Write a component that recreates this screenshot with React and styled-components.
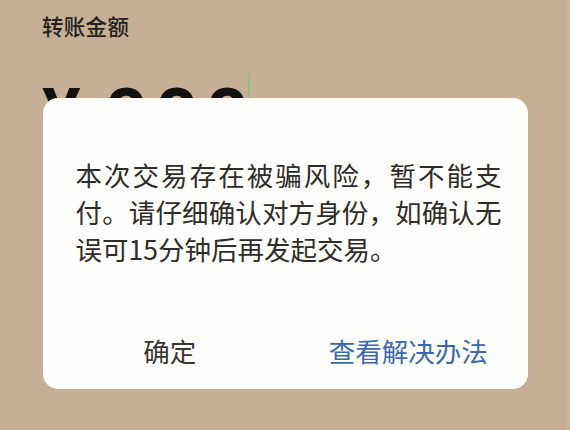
import React from "react";
import styled, { createGlobalStyle } from "styled-components";

const GlobalStyle = createGlobalStyle`
  html, body {
    margin: 0;
    padding: 0;
    background: #c6af95;
  }
  body {
    font-family: "Noto Sans CJK SC", "Noto Sans", sans-serif;
  }
`;

const App = () => {
  return (
    <Screen>
      <GlobalStyle />
      <TransferForm>
        <FieldLabel>转账金额</FieldLabel>
        <AmountRow>
          <Currency>¥</Currency>
          <Digits>888</Digits>
          <Cursor />
        </AmountRow>
      </TransferForm>
      <Overlay>
        <Dialog>
          <Message>
            本次交易存在被骗风险，暂不能支付。请仔细确认对方身份，如确认无误可15分钟后再发起交易。
          </Message>
          <Actions>
            <ActionButton>确定</ActionButton>
            <ActionButton primary>查看解决办法</ActionButton>
          </Actions>
        </Dialog>
      </Overlay>
      <EdgeStrip />
    </Screen>
  );
};

/* Start Styling */
const Screen = styled.div`
  position: relative;
  width: 570px;
  height: 430px;
  overflow: hidden;
  background: #c6af95;
`;
const TransferForm = styled.div`
  display: flex;
  flex-direction: column;
  padding: 12px 0 0 42px;
`;
const FieldLabel = styled.div`
  font-size: 21.5px;
  line-height: 28px;
  font-weight: 500;
  color: #231f1a;
  letter-spacing: 0.3px;
`;
const AmountRow = styled.div`
  display: flex;
  align-items: flex-start;
  margin-top: 33px;
`;
const Currency = styled.div`
  font-family: Roboto, "Liberation Sans", sans-serif;
  font-weight: 700;
  font-size: 72px;
  line-height: 72px;
  color: #111;
  margin-top: 7px;
  width: 63px;
`;
const Digits = styled.div`
  font-family: Roboto, "Liberation Sans", sans-serif;
  font-weight: 700;
  font-size: 74px;
  line-height: 72px;
  letter-spacing: 8px;
  color: #111;
  margin-top: 7px;
`;
const Cursor = styled.div`
  width: 2px;
  height: 40px;
  background: #8fbb88;
  margin-left: -8px;
`;
const Overlay = styled.div`
  position: absolute;
  inset: 0;
  display: flex;
  justify-content: center;
  align-items: flex-start;
  padding-top: 98px;
`;
const Dialog = styled.div`
  width: 485px;
  height: 291px;
  box-sizing: border-box;
  background: #fefefc;
  border-radius: 15px;
  display: flex;
  flex-direction: column;
  padding-top: 58px;
`;
const Message = styled.p`
  margin: 0 0 0 33px;
  width: 426px;
  font-size: 26.5px;
  line-height: 37px;
  color: #2f2c29;
  text-align: justify;
`;
const Actions = styled.div`
  margin-top: auto;
  display: flex;
  height: 52px;
  padding: 0 0 13px 8px;
`;
const ActionButton = styled.button`
  flex: 1;
  border: 0;
  background: transparent;
  font-family: "Noto Sans CJK SC", sans-serif;
  font-size: 26.5px;
  color: ${(p) => (p.primary ? "#3b68ad" : "#3a3633")};
  padding: 0;
`;
const EdgeStrip = styled.div`
  position: absolute;
  top: 0;
  right: 0;
  width: 4px;
  height: 100%;
  background: #c9b39a;
`;
/* End Styling */

export default App;
